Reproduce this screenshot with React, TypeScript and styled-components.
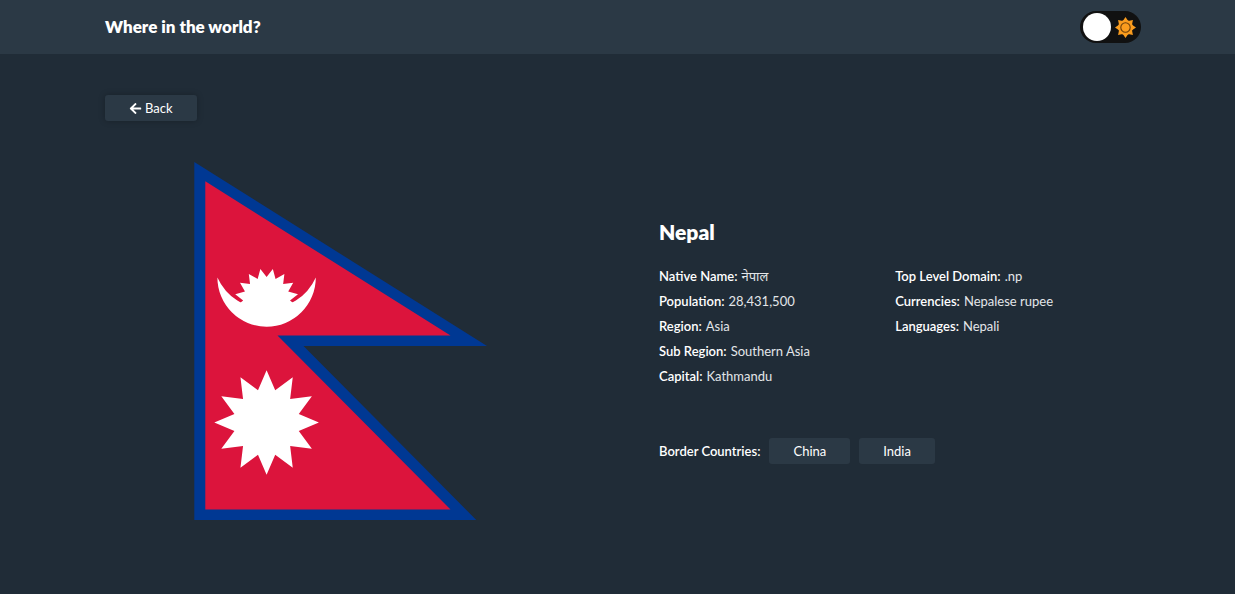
import React, { useState } from "react";
import styled, { createGlobalStyle } from "styled-components";
import { FaArrowLeft } from "react-icons/fa";

const GlobalStyle = createGlobalStyle`
  *, *::before, *::after { box-sizing: border-box; }
  body {
    margin: 0;
    background: #202c37;
    color: #fff;
    font-family: Lato, "Noto Sans", "Noto Sans Devanagari", sans-serif;
    font-size: 13px;
    line-height: 18px;
  }
`;

const Header = styled.header`
  display: flex;
  align-items: center;
  justify-content: space-between;
  height: 54px;
  padding: 0 94px 0 105px;
  background: #2b3945;
`;

const SiteTitle = styled.h1`
  margin: 0;
  font-size: 17px;
  line-height: 24px;
  font-weight: 800;
`;

const Toggle = styled.label`
  display: flex;
  align-items: center;
  justify-content: space-between;
  position: relative;
  width: 61px;
  height: 32px;
  padding: 0 5px 0 3px;
  border-radius: 16px;
  background: #111;
  cursor: pointer;
`;

const ToggleInput = styled.input`
  position: absolute;
  inset: 0;
  width: 100%;
  height: 100%;
  margin: 0;
  opacity: 0;
  cursor: pointer;
`;

const Knob = styled.span<{ $light: boolean }>`
  order: ${(p) => (p.$light ? 1 : 0)};
  width: 28px;
  height: 28px;
  border-radius: 50%;
  background: #fff;
`;

const Main = styled.main`
  padding: 41px 94px 40px 105px;
`;

const Button = styled.button<{ $shadow?: boolean }>`
  display: inline-flex;
  align-items: center;
  gap: 3px;
  height: 26px;
  padding: 0 24px;
  border: 0;
  border-radius: 3px;
  background: #2b3945;
  color: #fff;
  font: inherit;
  cursor: pointer;
  box-shadow: ${(p) => (p.$shadow ? "0 0 6px rgba(0, 0, 0, 0.25)" : "none")};
`;

const Country = styled.article`
  display: grid;
  grid-template-columns: 471fr 482fr;
  column-gap: 83px;
  align-items: center;
  margin-top: 41px;
`;

const FlagFrame = styled.div`
  display: flex;
  justify-content: center;
`;

const Name = styled.h2`
  margin: 0 0 22px;
  font-size: 21px;
  line-height: 26px;
  font-weight: 800;
`;

const Facts = styled.div`
  display: grid;
  grid-template-columns: 49fr 51fr;
  align-items: start;
`;

const FactList = styled.dl`
  display: grid;
  gap: 7px;
  margin: 0;
`;

const Fact = styled.div`
  display: flex;
  gap: 4px;
  height: 18px;
`;

const Term = styled.dt`
  font-weight: 600;
`;

const Value = styled.dd`
  margin: 0;
  color: #e3e6e9;
`;

const Borders = styled.div`
  display: flex;
  align-items: center;
  gap: 9px;
  margin-top: 53px;
`;

const BordersLabel = styled.h3`
  margin: 0;
  font-size: 13px;
  line-height: 18px;
  font-weight: 600;
`;

const star = (cx: number, cy: number, outer: number, inner: number, points: number, turn = 0) =>
  Array.from({ length: points * 2 }, (_, i) => {
    const angle = ((i + turn) * Math.PI) / points;
    const r = i % 2 ? inner : outer;
    return `${(cx + r * Math.sin(angle)).toFixed(2)},${(cy - r * Math.cos(angle)).toFixed(2)}`;
  }).join(" ");

const NepalFlag = () => (
  <svg width="293" height="358" viewBox="0 0 293 358" role="img" aria-label="Flag of Nepal">
    <clipPath id="moon-rays">
      <rect x="30" y="100" width="85" height="50" />
    </clipPath>
    <path fill="#003893" d="M0.3 0 L293 184 H109.5 L282.3 358 H0.3 Z" />
    <path fill="#dc143c" d="M11.3 19.3 L256.5 173.5 H83.5 L256.5 347.5 H11.3 Z" />
    <path fill="#fff" d="M23.4 115.5 A49.2 49.2 0 0 0 121.8 115.5 A54 54 0 0 1 23.4 115.5 Z" />
    <polygon fill="#fff" clipPath="url(#moon-rays)" points={star(72.6, 138.5, 32, 23.4, 16, 1)} />
    <polygon fill="#fff" points={star(72.6, 260.5, 52.3, 33.3, 12)} />
  </svg>
);

const SunIcon = () => (
  <svg width="21" height="21" viewBox="0 0 21 21" aria-hidden="true">
    <polygon fill="#fa9c1e" points={star(10.5, 10.5, 10.5, 7, 8)} />
    <circle cx="10.5" cy="10.5" r="7.4" fill="#fa9c1e" />
    <circle cx="10.5" cy="10.5" r="4.7" fill="#fa9c1e" stroke="#6b3f0c" strokeWidth="1.1" />
  </svg>
);

type Entry = [string, string];

const primary: Entry[] = [
  ["Native Name", "नेपाल"],
  ["Population", "28,431,500"],
  ["Region", "Asia"],
  ["Sub Region", "Southern Asia"],
  ["Capital", "Kathmandu"],
];

const secondary: Entry[] = [
  ["Top Level Domain", ".np"],
  ["Currencies", "Nepalese rupee"],
  ["Languages", "Nepali"],
];

const FactColumn = ({ entries }: { entries: Entry[] }) => (
  <FactList>
    {entries.map(([term, value]) => (
      <Fact key={term}>
        <Term>{term}:</Term>
        <Value>{value}</Value>
      </Fact>
    ))}
  </FactList>
);

export default function App() {
  const [light, setLight] = useState(false);
  return (
    <>
      <GlobalStyle />
      <Header>
        <SiteTitle>Where in the world?</SiteTitle>
        <Toggle>
          <ToggleInput
            type="checkbox"
            aria-label="Light mode"
            checked={light}
            onChange={(e) => setLight(e.target.checked)}
          />
          <Knob $light={light} />
          <SunIcon />
        </Toggle>
      </Header>
      <Main>
        <Button type="button" $shadow>
          <FaArrowLeft size={13} aria-hidden="true" />
          Back
        </Button>
        <Country>
          <FlagFrame>
            <NepalFlag />
          </FlagFrame>
          <div>
            <Name>Nepal</Name>
            <Facts>
              <FactColumn entries={primary} />
              <FactColumn entries={secondary} />
            </Facts>
            <Borders>
              <BordersLabel>Border Countries:</BordersLabel>
              <Button type="button">China</Button>
              <Button type="button">India</Button>
            </Borders>
          </div>
        </Country>
      </Main>
    </>
  );
}
